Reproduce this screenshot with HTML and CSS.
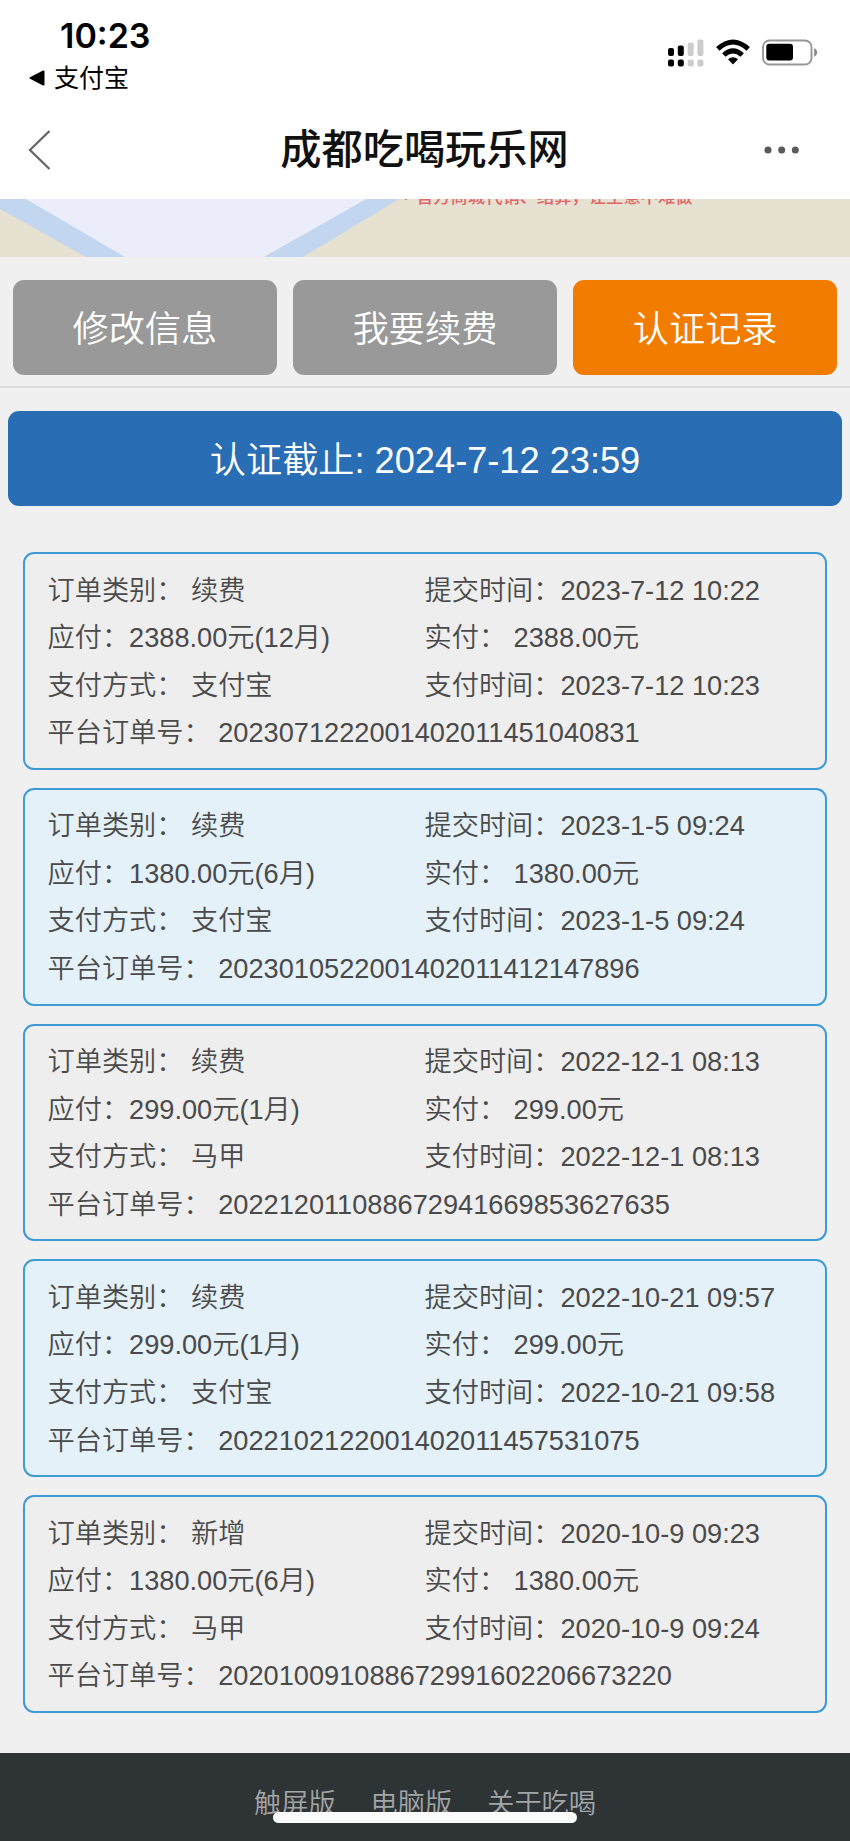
FILE: index.html
```html
<!DOCTYPE html>
<html lang="zh-CN">
<head>
    <meta charset="UTF-8">
    <meta name="viewport" content="width=device-width, initial-scale=1.0">
    <title>成都吃喝玩乐网</title>
    <link rel="stylesheet" href="styles.css">
</head>
<body>
<header class="top">
    <div class="status-bar">
        <div class="status-left">
            <div class="time">10:23</div>
            <div class="back-app">
                <svg width="16" height="16" viewBox="0 0 16 16"><path d="M1 7.2 L14 .6 Q15.5 0 15.5 1.600 V14.400 Q15.5 16 14 15.400 L1 8.800 Q-.4 8 1 7.200Z"/></svg>
                <span>支付宝</span>
            </div>
        </div>
        <div class="status-icons">
            <svg width="36" height="28" viewBox="0 0 36 28">
                <rect x="0" y="9" width="6" height="8" rx="2"/>
                <rect x="9.800" y="6.500" width="6" height="10.500" rx="2"/>
                <rect x="0" y="20.500" width="6" height="7" rx="2"/>
                <rect x="9.800" y="20.500" width="6" height="7" rx="2"/>
                <g fill="#cccccc">
                    <rect x="19.700" y="3.500" width="6" height="13.500" rx="2"/>
                    <rect x="29.400" y="0.500" width="6" height="16.500" rx="2"/>
                    <rect x="19.700" y="20.500" width="6" height="7" rx="2"/>
                    <rect x="29.400" y="20.500" width="6" height="7" rx="2"/>
                </g>
            </svg>
            <svg class="wifi" width="34" height="28" viewBox="0 0 34 28">
                <g fill="none" stroke="#000" stroke-width="5">
                    <path d="M1.800 9.900 Q17 -3.900 32.200 9.900"/>
                    <path d="M7.800 16 Q17 7.800 26.200 16"/>
                </g>
                <path d="M12 20.300 Q17 16.300 22 20.300 L17 25.500Z"/>
            </svg>
            <svg class="battery" width="56" height="28" viewBox="0 0 56 28">
                <rect x="1" y="1.500" width="48.500" height="24" rx="6.500" fill="none" stroke="#979797" stroke-width="1.900"/>
                <rect x="4.300" y="4.700" width="26.700" height="16.800" rx="3"/>
                <path d="M52.200 9 Q55.200 10.500 55.200 13.300 Q55.200 16.200 52.200 17.700Z" fill="#888"/>
            </svg>
        </div>
    </div>
    <div class="nav-bar">
        <svg width="23" height="40" viewBox="0 0 23 40"><path d="M21.500 1 L2 20 L21.500 39" fill="none" stroke="#666" stroke-width="2.300"/></svg>
        <h1>成都吃喝玩乐网</h1>
        <svg class="more" width="36" height="8" viewBox="0 0 36 8" fill="#5a5a5a"><circle cx="4" cy="4" r="3.500"/><circle cx="17.700" cy="4" r="3.500"/><circle cx="31.300" cy="4" r="3.500"/></svg>
    </div>
</header>

<div class="banner">
    <svg class="banner-bg" width="850" height="58" viewBox="0 0 850 58">
        <path d="M0 0 H399 L303 58 H86 L0 10Z" fill="#c3d6ef"/>
        <path d="M26 0 H366 L264 58 H125Z" fill="#ebeefa"/>
    </svg>
    <p class="banner-text"><span class="dot">·</span>官方商城代销、结算，让生意不难做</p>
</div>

<nav class="tabs">
    <a class="tab">修改信息</a>
    <a class="tab">我要续费</a>
    <a class="tab active">认证记录</a>
</nav>

<div class="deadline">认证截止: 2024-7-12 23:59</div>

<main class="orders">
    <div class="order">
        <span>订单类别： 续费</span><span>提交时间：2023-7-12 10:22</span>
        <span>应付：2388.00元(12月)</span><span>实付： 2388.00元</span>
        <span>支付方式： 支付宝</span><span>支付时间：2023-7-12 10:23</span>
        <span class="number">平台订单号： 2023071222001402011451040831</span>
    </div>
    <div class="order">
        <span>订单类别： 续费</span><span>提交时间：2023-1-5 09:24</span>
        <span>应付：1380.00元(6月)</span><span>实付： 1380.00元</span>
        <span>支付方式： 支付宝</span><span>支付时间：2023-1-5 09:24</span>
        <span class="number">平台订单号： 2023010522001402011412147896</span>
    </div>
    <div class="order">
        <span>订单类别： 续费</span><span>提交时间：2022-12-1 08:13</span>
        <span>应付：299.00元(1月)</span><span>实付： 299.00元</span>
        <span>支付方式： 马甲</span><span>支付时间：2022-12-1 08:13</span>
        <span class="number">平台订单号： 202212011088672941669853627635</span>
    </div>
    <div class="order">
        <span>订单类别： 续费</span><span>提交时间：2022-10-21 09:57</span>
        <span>应付：299.00元(1月)</span><span>实付： 299.00元</span>
        <span>支付方式： 支付宝</span><span>支付时间：2022-10-21 09:58</span>
        <span class="number">平台订单号： 2022102122001402011457531075</span>
    </div>
    <div class="order">
        <span>订单类别： 新增</span><span>提交时间：2020-10-9 09:23</span>
        <span>应付：1380.00元(6月)</span><span>实付： 1380.00元</span>
        <span>支付方式： 马甲</span><span>支付时间：2020-10-9 09:24</span>
        <span class="number">平台订单号： 202010091088672991602206673220</span>
    </div>
</main>

<footer class="footer">
    <a>触屏版</a>
    <a>电脑版</a>
    <a>关于吃喝</a>
    <div class="home-indicator"></div>
</footer>
</body>
</html>
```
FILE: styles.css
```css
* {
    box-sizing: border-box;
}
body {
    margin: 0;
    width: 850px;
    height: 1841px;
    overflow: hidden;
    display: flex;
    flex-direction: column;
    background: #f0f0f0;
    color: #4a4a4a;
    font-family: "Liberation Sans", "Noto Sans CJK SC", sans-serif;
    font-weight: 350;
}
svg {
    display: block;
    flex: none;
}
.top {
    height: 199px;
    background: #fff;
    color: #000;
}
.status-bar {
    height: 100px;
    display: flex;
    justify-content: space-between;
}
.status-left {
    padding: 15px 0 0 29px;
}
.time {
    padding-left: 31px;
    font: 600 34px/42px Inter, sans-serif;
}
.back-app {
    display: flex;
    align-items: center;
    gap: 9px;
    font-size: 25px;
    font-weight: 400;
    line-height: 42px;
}
.status-icons {
    display: flex;
    padding: 38.500px 32px 0 0;
}
.wifi {
    margin-left: 12px;
}
.battery {
    margin-left: 12px;
}
.nav-bar {
    display: grid;
    grid-template-columns: 50px 1fr 50px;
    align-items: center;
    height: 99px;
    padding: 0 50px 0 28px;
}
.nav-bar h1 {
    margin: 0;
    padding-left: 21px;
    color: #111;
    font-size: 41.200px;
    font-weight: 500;
    line-height: 60px;
    text-align: center;
}
.more {
    justify-self: end;
}

/* banner scrolled under the title bar */
.banner {
    position: relative;
    height: 58px;
    overflow: hidden;
    background: #e7e1d1;
}
.banner-text {
    position: absolute;
    left: 416px;
    top: -15px;
    margin: 0;
    color: #e06668;
    font-size: 17.300px;
    font-weight: 500;
    line-height: 26px;
    white-space: nowrap;
}
.dot {
    position: absolute;
    left: -13px;
    top: 1px;
}

.tabs {
    display: flex;
    gap: 16.500px;
    height: 131px;
    padding: 22.500px 13px 0;
    border-bottom: 2px solid #dcdcdc;
}
.tab {
    flex: 1;
    height: 95px;
    border-radius: 11px;
    background: #999;
    color: #fff;
    font-size: 36.200px;
    line-height: 99px;
    text-align: center;
}
.tab.active {
    background: #f17c00;
}
.deadline {
    height: 95px;
    margin: 23px 8px 0;
    border-radius: 11px;
    background: #296eb4;
    color: #fff;
    font-size: 36.200px;
    line-height: 99px;
    text-align: center;
}
.orders {
    display: flex;
    flex-direction: column;
    gap: 17.900px;
    padding: 46px 23px 0;
}
.order {
    display: grid;
    grid-template-columns: 377px 1fr;
    grid-auto-rows: 47.600px;
    height: 217.900px;
    padding: 12.500px 0 0 22.500px;
    border: 2px solid #3e9bd4;
    border-radius: 11px;
    background: #eee;
    font-size: 27.200px;
    line-height: 47.600px;
    white-space: nowrap;
}
.order:nth-child(even) {
    background: #e4f1f8;
}
.number {
    grid-column: 1 / 3;
}
.footer {
    position: relative;
    display: flex;
    justify-content: center;
    gap: 35px;
    height: 88px;
    margin-top: auto;
    padding-top: 31px;
    background: #2e3336;
    color: #a3a5a6;
    font-size: 27.200px;
    line-height: 40px;
}
.home-indicator {
    position: absolute;
    left: 273px;
    top: 58.500px;
    width: 304px;
    height: 11.500px;
    border-radius: 6px;
    background: #fafafa;
}
```
